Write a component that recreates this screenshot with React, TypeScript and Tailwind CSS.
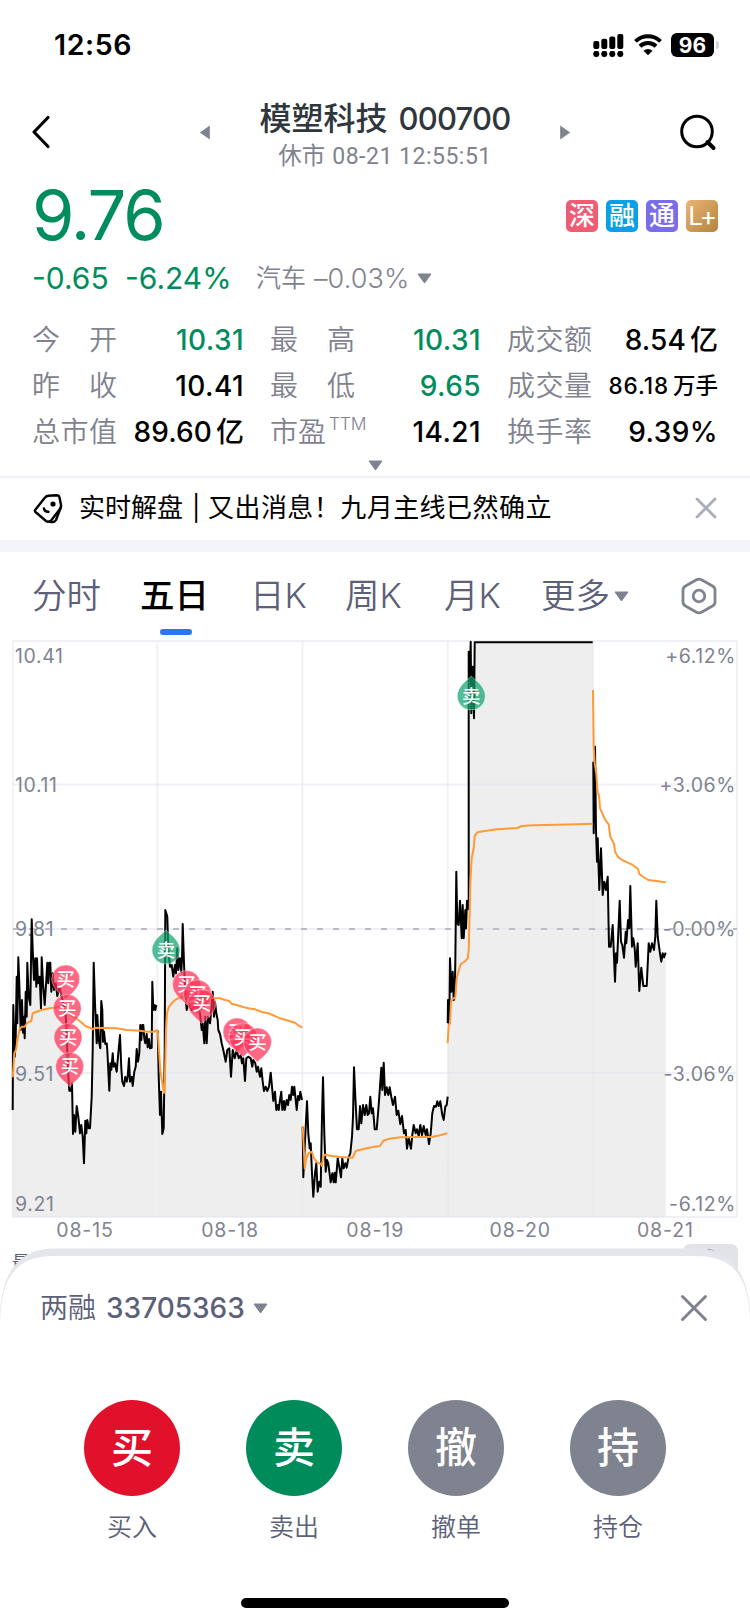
import React from "react";

type Series = {
  origin: [number, number];
  price: string;
  average: string;
};

// Plot values are stored in thirds of a pixel, relative to each series' origin.
const SERIES: Series[] = [
  {
    origin: [0, 850],
    price:
      "38,780 39,560 40,465 44,620 47,560 50,380 52,520 55,322 58,400 62,540 66,450 69,548 72,500 74,565 77,425 80,500 82,338 86,440 91,465 95,208 98,300 102,390 106,325 109,410 111,325 114,400 119,380 123,475 125,322 129,400 134,465 138,405 142,338 145,400 148,338 151,338 154,425 158,370 162,420 167,400 172,438 178,410 184,435 190,460 196,480 200,550 204,660 208,722 213,722 216,700 219,852 222,795 226,845 230,768 235,800 240,850 244,825 248,860 252,940 256,812 259,850 262,810 266,835 270,835 275,740 278,600 281,338 285,460 290,580 292,495 296,570 301,595 304,453 307,480 309,575 312,545 316,582 320,580 322,600 328,722 331,640 334,660 338,610 341,650 345,640 350,665 355,610 360,555 364,655 367,695 372,708 376,680 380,695 383,680 387,625 390,695 395,680 398,708 403,665 407,650 410,597 414,635 418,610 421,525 424,570 427,525 430,525 433,565 436,580 440,552 443,592 447,567 450,595 455,593 457,395 460,480 464,465 466,480 469,465",
    average:
      "38,682 40,660 43,610 48,600 54,560 60,535 66,530 74,530 82,518 94,513 98,490 110,485 124,480 150,475 180,470 200,476 216,498 232,508 242,515 256,528 270,533 278,538 284,533 320,534 350,535 380,540 420,542 440,545 460,545 473,540",
  },
  {
    origin: [0, 850],
    price:
      "473,540 476,680 480,795 483,725 487,852 491,835 494,600 496,180 499,190 502,200 505,300 510,350 515,345 520,380 525,345 528,370 532,295 535,360 540,325 544,365 546,325 548,222 552,340 556,430 560,480 566,460 575,480 590,460 600,490 605,540 608,520 613,580 616,500 620,580 624,500 630,520 634,480 638,425 642,500 645,455 649,490 653,510 655,540 660,552 665,580 670,600 677,635 682,600 688,595 693,680 698,600 704,625 710,600 716,625 722,615 726,640 730,625 735,693 739,625 745,620 752,625 757,650 760,630 766,640 770,665 774,650 780,680 784,655 788,695 792,723 797,710 802,723 807,710 812,668 816,710 820,753 825,725 829,780 833,765 836,780 840,750 844,725 847,780 852,753 854,780 860,750 864,765 868,735 872,750 876,710 880,735 883,710 887,750 890,780 894,738 898,750 901,725 906,750",
    average:
      "473,540 476,590 481,660 487,700 491,728 493,728 496,640 498,540 501,490 506,472 515,460 528,448 545,441 570,440 640,444 660,445 675,450 688,453 694,461 710,465 730,471 745,475 765,478 785,486 805,490 820,496 840,505 860,511 885,518 895,526 907,533",
  },
  {
    origin: [290, 1000],
    price:
      "38,380 40,532 44,440 51,304 55,400 59,445 62,430 66,520 70,590 75,520 79,490 83,575 88,545 92,560 96,350 99,232 103,400 107,515 111,480 115,490 122,547 127,520 131,547 134,518 137,547 143,475 148,500 153,532 157,475 161,505 166,490 170,503 175,475 181,460 186,410 189,350 192,202 196,290 201,388 206,388 210,318 214,370 219,315 224,345 229,315 233,345 237,340 241,290 245,340 249,325 254,388 260,388 265,330 270,260 274,203 277,270 281,188 285,285 290,262 295,285 299,262 304,290 309,315 315,290 320,345 325,332 331,372 336,348 342,400 347,390 351,446 356,415 363,446 367,405 371,375 377,400 381,388 386,408 391,375 396,405 401,378 407,405 411,388 417,432 422,400 427,340 432,318 438,320 442,304 446,318 451,304 457,345 461,360 466,320 470,315 473,290",
    average:
      "38,378 41,440 44,505 49,475 55,460 65,455 72,475 82,487 93,492 96,498 99,470 105,464 125,468 150,471 188,473 197,453 220,447 245,442 270,438 280,422 295,417 330,412 380,411 425,411 450,406 472,400",
  },
  {
    origin: [430, 630],
    price:
      "53,1180 54,1110 58,1180 60,985 64,1085 68,1025 71,1110 74,1090 76,1000 79,725 82,880 86,885 90,812 95,925 98,825 101,925 106,840 108,895 111,812 116,838 116,65 119,150 122,35 124,250 128,110 132,265 134,37 488,37",
    average:
      "53,1240 56,1185 60,1180 63,1115 70,1105 76,1103 80,1045 86,1022 92,1003 105,994 113,985 116,960 119,840 121,760 125,685 131,655 134,618 142,607 165,603 200,598 262,594 275,588 310,586 380,584 440,583 488,581",
  },
  {
    origin: [430, 630],
    price:
      "490,395 491,610 495,350 498,600 501,695 503,625 508,780 513,655 518,795 523,755 528,780 533,740 537,950 542,950 548,885 555,1055 558,970 561,998 569,812 573,935 577,945 582,983 587,905 589,940 594,870 598,895 601,768 606,950 610,925 614,955 617,1010 623,940 628,1083 634,1013 640,1068 650,1068 656,940 661,965 666,940 672,960 676,920 679,812 683,920 689,965 694,995 698,970 702,982 707,968",
    average:
      "489,180 491,350 494,400 499,430 503,490 507,495 510,535 520,557 527,572 536,583 541,620 552,642 555,665 565,682 580,692 605,703 624,717 628,732 640,741 655,750 685,754 707,757",
  },
];

const toPoints = (raw: string, [ox, oy]: [number, number]): [number, number][] =>
  raw.split(" ").map((pair) => {
    const [x, y] = pair.split(",").map(Number);
    return [ox + x / 3, oy + y / 3];
  });

const toPath = (points: [number, number][]) =>
  "M" + points.map(([x, y]) => `${x.toFixed(1)} ${y.toFixed(1)}`).join("L");

const TRADES: { side: "buy" | "sell"; x: number; y: number }[] = [
  { side: "buy", x: 65.7, y: 979 },
  { side: "buy", x: 67.2, y: 1008.5 },
  { side: "buy", x: 68, y: 1037.5 },
  { side: "buy", x: 69.7, y: 1066.5 },
  { side: "sell", x: 166, y: 950 },
  { side: "buy", x: 186.5, y: 984.5 },
  { side: "buy", x: 197.5, y: 994 },
  { side: "buy", x: 201.8, y: 1003.5 },
  { side: "buy", x: 237, y: 1032 },
  { side: "buy", x: 243, y: 1037 },
  { side: "buy", x: 257.5, y: 1042 },
  { side: "sell", x: 471.3, y: 696 },
];

function TradeMarker({ side, x, y }: { side: "buy" | "sell"; x: number; y: number }) {
  const buy = side === "buy";
  return (
    <g transform={`translate(${x} ${y})`}>
      <path
        d="M0 20C-3 16.5 -14 10 -14 0A14 14 0 0 1 14 0C14 10 3 16.5 0 20Z"
        transform={buy ? undefined : "rotate(180)"}
        fill={buy ? "#ff3257" : "#12a46f"}
        fillOpacity={buy ? 0.73 : 0.72}
        stroke="#fff"
        strokeOpacity={0.5}
        strokeWidth={0.8}
      />
      <text y={6.8} textAnchor="middle" fontSize={18.5} fontWeight={500} fill="#fff" className="font-['Noto_Sans_CJK_SC',sans-serif]">
        {buy ? "买" : "卖"}
      </text>
    </g>
  );
}

function Chart() {
  return (
    <svg width={750} height={620} viewBox="0 630 750 620" className="block shrink-0">
      {SERIES.map((s, i) => {
        const pts = toPoints(s.price, s.origin);
        const first = pts[0][0];
        const last = pts[pts.length - 1][0];
        return <path key={i} d={`${toPath(pts)}L${last} 1217L${first} 1217Z`} fill="#eeeeee" />;
      })}
      <g stroke="#e2e3f0" strokeOpacity={0.5} strokeWidth={1.8}>
        {[641, 784.5, 929, 1073, 1217].map((y) => (
          <path key={y} d={`M12.5 ${y}H737`} />
        ))}
        {[13, 157.3, 302.5, 447.8, 593, 737].map((x) => (
          <path key={x} d={`M${x} 641V1217`} />
        ))}
      </g>
      <g fontSize={19.5} fill="#80838f" className="font-[Inter,sans-serif] tracking-[0.6px]">
        {[
          ["10.41", 663],
          ["10.11", 791.5],
          ["9.81", 936],
          ["9.51", 1080.5],
          ["9.21", 1211],
        ].map(([t, y]) => (
          <text key={t} x={15} y={y}>
            {t}
          </text>
        ))}
        {[
          ["+6.12%", 663],
          ["+3.06%", 791.5],
          ["-0.00%", 936],
          ["-3.06%", 1080.5],
          ["-6.12%", 1211],
        ].map(([t, y]) => (
          <text key={t} x={736} y={y} textAnchor="end">
            {t}
          </text>
        ))}
        {["08-15", "08-18", "08-19", "08-20", "08-21"].map((t, i) => (
          <text key={t} x={85 + i * 145.1} y={1237} textAnchor="middle" className="tracking-[0.9px]">
            {t}
          </text>
        ))}
      </g>
      <path d="M13 929H737" stroke="#a9abba" strokeWidth={1.5} strokeDasharray="6 10" />
      <g fill="none" strokeLinejoin="round" strokeWidth={2}>
        {SERIES.map((s, i) => (
          <path key={i} d={toPath(toPoints(s.price, s.origin))} stroke="#000" />
        ))}
        {SERIES.map((s, i) => (
          <path key={i} d={toPath(toPoints(s.average, s.origin))} stroke="#ff9a36" strokeWidth={2} />
        ))}
      </g>
      {TRADES.map((t, i) => (
        <TradeMarker key={i} {...t} />
      ))}
    </svg>
  );
}

function Triangle({ className = "" }: { className?: string }) {
  return (
    <svg width={15} height={11} viewBox="0 0 15 11" className={`shrink-0 ${className}`}>
      <path d="M1 1H14L7.5 10Z" fill="#7f828f" stroke="#7f828f" strokeLinejoin="round" />
    </svg>
  );
}

function StatusBar() {
  return (
    <div className="flex h-[90px] shrink-0 items-center justify-between pr-[31px] pl-[54px]">
      <span className="text-[28.500px] leading-none font-semibold tracking-[0.6px]">12:56</span>
      <div className="flex items-center">
        <svg width={31} height={25} viewBox="0 0 31 25">
          {[0, 1, 2, 3].map((i) => (
            <g key={i}>
              <rect x={0.3 + i * 8} y={8 - i * 2.3} width={6} height={8 + i * 2.3} rx={2} />
              <rect x={0.3 + i * 8} y={18} width={6} height={6} rx={2.4} />
            </g>
          ))}
        </svg>
        <svg width={28} height={22} viewBox="0 0 28 22" className="ml-2.5">
          <path d="M1.5 7.4A18 18 0 0 1 26.500 7.400M6 12.300A11.600 11.600 0 0 1 22 12.300" fill="none" stroke="#000" strokeWidth={4} />
          <path d="M14 21.300L9.500 16.700A6.500 6.500 0 0 1 18.500 16.700Z" />
        </svg>
        <div className="ml-[9px] flex h-6 w-[43px] items-center justify-center rounded-[6px] bg-black text-[21px] leading-none font-bold text-white">
          96
        </div>
        <div className="ml-[2px] h-2 w-[3px] rounded-r-full bg-gray-300" />
      </div>
    </div>
  );
}

function Header() {
  return (
    <header className="flex h-[88px] shrink-0 items-center pr-[33px] pl-[31px]">
      <svg width={20} height={34} viewBox="0 0 20 34" className="mt-[-4px]">
        <path d="M17 2.500L3 17L17 31.500" fill="none" stroke="#000" strokeWidth={3.2} strokeLinecap="round" strokeLinejoin="round" />
      </svg>
      <svg width={12} height={15} viewBox="0 0 11 14" className="mt-[-4px] ml-[148px]">
        <path d="M10 .5V13.500L.7 7Z" fill="#7f828f" />
      </svg>
      <div className="-mt-0.5 flex w-[348px] flex-col items-center">
        <h1 className="flex h-[46px] items-center gap-[11px] text-[32px] leading-none font-medium whitespace-nowrap text-[#30363d]">
          模塑科技 <span className="text-[31px] tracking-[-0.8px]">000700</span>
        </h1>
        <p className="flex h-[29px] items-center gap-[7px] text-[23.500px] leading-none text-[#7f828f]">
          休市{" "}
          <span className="font-[Roboto,sans-serif] text-[23px] tracking-[0.5px]">08-21 12:55:51</span>
        </p>
      </div>
      <svg width={12} height={15} viewBox="0 0 11 14" className="mt-[-4px]">
        <path d="M1 .5V13.500L10.300 7Z" fill="#7f828f" />
      </svg>
      <svg width={38} height={38} viewBox="0 0 38 38" className="mt-[-4px] ml-auto" fill="none" stroke="#000" strokeWidth={3}>
        <circle cx={18} cy={18.500} r={15.300} />
        <path d="M28.500 29L34.500 35" strokeWidth={4} strokeLinecap="round" />
      </svg>
    </header>
  );
}

const BADGES = [
  { text: "深", cls: "bg-[#f05c74]" },
  { text: "融", cls: "bg-[#0b9fe8]" },
  { text: "通", cls: "bg-[#7b6cea]" },
  { text: "L+", cls: "bg-linear-to-br from-[#e9b673] to-[#b5823f]" },
];

function Quote() {
  return (
    <section className="flex h-[124px] shrink-0 flex-col pr-8 pl-8">
      <div className="flex h-[77px] items-center justify-between">
        <span className="text-[68.500px] leading-none tracking-[-2px] text-[#008d5d]">9.76</span>
        <div className="flex gap-2">
          {BADGES.map((b) => (
            <span key={b.text} className={`flex size-8 items-center justify-center rounded-[5px] text-[26px] leading-none text-white ${b.text === "L+" ? "tracking-[-1px]" : "font-medium"} ${b.cls}`}>
              {b.text}
            </span>
          ))}
        </div>
      </div>
      <div className="flex h-[49px] items-center pt-px text-[30px] leading-none text-[#008d5d]">
        <span className="w-[93px]">-0.65</span>
        <span className="w-[131px]">-6.24%</span>
        <span className="text-[25px] font-[350] text-[#7f828f]">汽车</span>
        <span className="ml-2 text-[27px] font-[350] tracking-[0.1px] text-[#7f828f]">–0.03%</span>
        <Triangle className="ml-[8px]" />
      </div>
    </section>
  );
}

type Stat = { label: string; sup?: string; value: string; unit?: string; green?: boolean; small?: boolean };

const STATS: Stat[] = [
  { label: "今开", value: "10.31", green: true },
  { label: "最高", value: "10.31", green: true },
  { label: "成交额", value: "8.54", unit: "亿" },
  { label: "昨收", value: "10.41" },
  { label: "最低", value: "9.65", green: true },
  { label: "成交量", value: "86.18", unit: "万手", small: true },
  { label: "总市值", value: "89.60", unit: "亿" },
  { label: "市盈", sup: "TTM", value: "14.21" },
  { label: "换手率", value: "9.39%" },
];

function Stats() {
  return (
    <section className="flex h-[174px] shrink-0 flex-col items-center pr-8 pl-8 pt-[15px]">
      <div className="grid w-full grid-cols-[212px_211px_211px] justify-between">
        {STATS.map((s) => (
          <div key={s.label} className="flex h-[46px] items-center justify-between leading-none">
            <span className={`flex text-[28px] font-[350] text-[#7f828f] ${s.sup ? "" : "w-[85px] justify-between"}`}>
              {[...s.label].map((c) => (
                <span key={c}>{c}</span>
              ))}
              {s.sup && <span className="mt-[-3px] ml-[3px] text-[17.500px] tracking-[-0.3px]">{s.sup}</span>}
            </span>
            <span className={`flex items-center gap-1 font-medium ${s.green ? "text-[#008d5d]" : "text-black"} ${s.small ? "text-[22.500px]" : "text-[28px]"}`}>
              <span className={s.small ? "tracking-[0.9px]" : s.unit ? "tracking-[0.1px]" : "tracking-[0.4px]"}>{s.value}</span>
              {s.unit && <span>{s.unit}</span>}
            </span>
          </div>
        ))}
      </div>
      <Triangle className="mt-[5px]" />
    </section>
  );
}

function NewsBar() {
  return (
    <div className="flex h-[64px] shrink-0 items-center border-t-2 border-[#f1f2f9] pr-[33px] pl-[33px]">
      <svg width={30} height={30} viewBox="0 0 30 30" fill="none" stroke="#000" strokeWidth={2.4} strokeLinejoin="round" strokeLinecap="round">
        <path d="M2.500 15.500L12 3.500Q13.500 1.800 15.500 1.700L23.500 1.300Q26 1.300 26.500 3.500L28 11Q28.200 13 27.300 14.500L18.500 26Q15.500 29 13 27L2.500 18Q1.200 16.800 2.500 15.500Z" />
        <path d="M28 13L23 26Q21.500 28.500 18.500 28L16.500 27.500" />
        <circle cx={20} cy={10} r={2.600} fill="#000" stroke="none" />
        <path d="M11 14.500C11.500 17 13 18 15.500 17.800" />
      </svg>
      <span className="mt-[-2px] ml-[16px] flex items-center text-[26px] leading-none whitespace-nowrap">
        <span>实时解盘</span>
        <span className="mx-[9px] w-[7px] text-center text-[25px]">|</span>
        <span className="tracking-[0.45px]">又出消息！九月主线已然确立</span>
      </span>
      <svg width={22} height={22} viewBox="0 0 22 22" className="mt-[-2px] ml-auto">
        <path d="M2 2L20 20M20 2L2 20" stroke="#a9adb8" strokeWidth={2.800} strokeLinecap="round" />
      </svg>
    </div>
  );
}

const TABS = [
  { label: "分时", cls: "w-[108px]" },
  { label: "五日", cls: "w-[110px]", active: true },
  { label: "日K", cls: "w-[95px]" },
  { label: "周K", cls: "w-[99px]" },
  { label: "月K", cls: "w-[97px]" },
  { label: "更多", cls: "w-[73px]" },
];

function Tabs() {
  return (
    <nav className="flex h-[78px] shrink-0 items-center pr-[33px] pl-8 text-[34.500px] leading-none">
      {TABS.map((t) => (
        <div key={t.label} className={`relative flex h-full items-center ${t.cls} ${t.active ? "font-medium text-black" : "font-[350] text-[#5c6078]"}`}>
          <span className="mt-2.5">{t.label}</span>
          {t.active && <span className="absolute top-[77px] left-[20px] h-[6px] w-8 rounded-full bg-[#2977f5]" />}
        </div>
      ))}
      <Triangle className="mt-[10px]" />
      <svg width={36} height={38} viewBox="0 0 36 38" className="mt-[10px] ml-auto" fill="none" stroke="#7f828f" strokeWidth={2.800}>
        <path d="M15.500 2.800Q18 1.500 20.500 2.800L31.500 9Q34 10.500 34 13V25Q34 27.500 31.500 29L20.500 35.200Q18 36.500 15.500 35.200L4.500 29Q2 27.500 2 25V13Q2 10.500 4.500 9Z" />
        <circle cx={18} cy={19} r={5.800} />
      </svg>
    </nav>
  );
}

const ACTIONS = [
  { char: "买", label: "买入", cls: "bg-[#e1112c]" },
  { char: "卖", label: "卖出", cls: "bg-[#008b5b]" },
  { char: "撤", label: "撤单", cls: "bg-[#7f828f]" },
  { char: "持", label: "持仓", cls: "bg-[#7f828f]" },
];

function TradeSheet() {
  return (
    <div className="relative flex h-[374px] shrink-0 flex-col">
      <svg width={750} height={374} viewBox="0 1250 750 374" className="absolute inset-0 overflow-visible">
        <text x={12} y={1269} fontSize={18} fill="#5c6078" className="font-['Noto_Sans_CJK_SC',sans-serif]">
          最
        </text>
        <path d="M683 1262V1252Q683 1244 691 1244H730Q738 1244 738 1252V1300H683Z" fill="#e2e3e8" />
        <path d="M707 1249.500Q712 1249 715 1252" fill="none" stroke="#9a9ca6" />
        <path d="M0 1320V1310C3 1276 16 1248.500 54 1248.500H696C734 1248.500 747 1276 750 1310V1320Z" fill="#e5e6eb" />
        <path d="M0 1624V1322C1 1280 14 1256 54 1256H696C736 1256 749 1280 750 1322V1624Z" fill="#fff" />
      </svg>
      <div className="relative mt-[30px] flex h-14 items-center pr-[42px] pl-10 text-[28px] leading-none text-[#5c6078]">
        <span className="font-[350]">两融</span>
        <span className="ml-[10px] font-medium">33705363</span>
        <Triangle className="ml-[8px]" />
        <svg width={28} height={28} viewBox="0 0 28 28" className="ml-auto">
          <path d="M2.500 2.500L25.500 25.500M25.500 2.500L2.500 25.500" stroke="#7f828f" strokeWidth={3} strokeLinecap="round" />
        </svg>
      </div>
      <div className="relative mt-16 flex gap-[66px] pl-[84px]">
        {ACTIONS.map((a) => (
          <div key={a.label} className="flex w-24 flex-col items-center">
            <span className={`flex size-24 items-center justify-center rounded-full text-[42px] leading-none font-medium text-white ${a.cls}`}>
              {a.char}
            </span>
            <span className="mt-[19px] text-[25px] leading-none font-[350] text-[#5c6078]">{a.label}</span>
          </div>
        ))}
      </div>
      <div className="relative mt-auto mb-4 h-[10px] w-[268px] self-center rounded-full bg-black" />
    </div>
  );
}

export default function App() {
  return (
    <main className="flex h-[1624px] w-[750px] flex-col overflow-hidden bg-white font-[Inter,'Noto_Sans_CJK_SC',sans-serif] text-black">
      <StatusBar />
      <Header />
      <Quote />
      <Stats />
      <NewsBar />
      <div className="h-3 shrink-0 bg-[#f4f5fa]" />
      <Tabs />
      <Chart />
      <TradeSheet />
    </main>
  );
}
